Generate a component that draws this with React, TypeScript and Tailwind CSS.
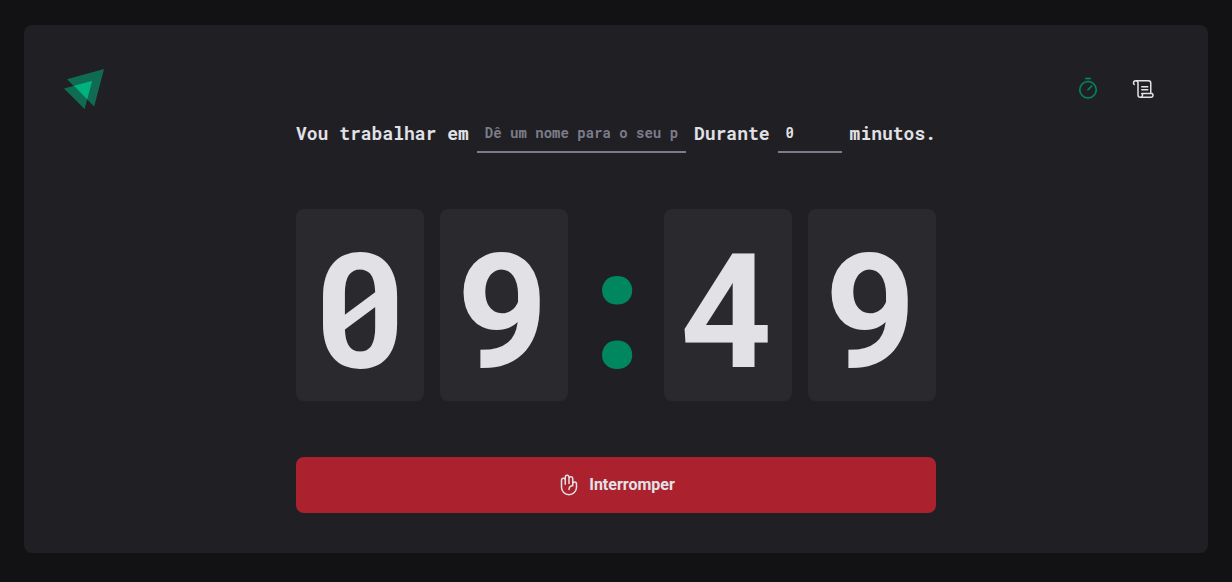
import { PiHandPalm, PiScroll, PiTimer } from "react-icons/pi";

function Logo() {
  return (
    <svg width="40" height="40" viewBox="0 0 40 40" role="img" aria-label="Ignite Timer">
      <path d="M3 10.3 40 0 30.2 37.4Z" fill="#00B37E" fillOpacity="0.52" />
      <path d="M0 19.5 28 12 20.6 40Z" fill="#00B37E" fillOpacity="0.52" />
      <path d="M10.2 16.8 28 12 23.2 30.1Z" fill="#00B37E" />
    </svg>
  );
}

function Digit({ value }: { value: string }) {
  return (
    <span className="flex h-48 w-1/5 shrink-0 items-center justify-center rounded-lg bg-[#29292e]">{value}</span>
  );
}

const field =
  "h-10 min-w-0 border-b-2 border-[#7c7c8a] bg-transparent px-2 text-sm font-bold text-[#e1e1e6] outline-none placeholder:text-[#7c7c8a] focus:border-[#00875f]";

export default function App() {
  return (
    <div className="min-h-screen bg-[#121214] px-6 pt-[25px] pb-7 font-['Roboto',sans-serif]">
      <div className="mx-auto flex max-w-[1184px] flex-col rounded-lg bg-[#202024] p-10">
        <header className="flex items-center justify-between">
          <Logo />
          <nav className="flex gap-2">
            <a href="#timer" aria-label="Timer" className="flex size-12 items-center justify-center text-[#00875f]">
              <PiTimer size={24} strokeWidth={2} />
            </a>
            <a href="#history" aria-label="Histórico" className="flex size-12 items-center justify-center text-[#e1e1e6]">
              <PiScroll size={24} />
            </a>
          </nav>
        </header>
        <main>
          <form className="mx-auto flex max-w-[640px] flex-col gap-14">
            <div className="flex items-center gap-2 font-['Roboto_Mono','DejaVu_Sans_Mono',monospace] text-lg font-bold text-[#e1e1e6]">
              <label htmlFor="task" className="whitespace-nowrap">Vou trabalhar em</label>
              <input id="task" placeholder="Dê um nome para o seu projeto" className={`${field} flex-1`} />
              <label htmlFor="minutes">Durante</label>
              <input id="minutes" inputMode="numeric" defaultValue="0" className={`${field} w-16`} />
              <span>minutos.</span>
            </div>
            <div className="flex gap-4 font-['Roboto_Mono','Roboto',sans-serif] text-[160px] leading-[128px] font-bold text-[#e1e1e6]">
              <Digit value="0" />
              <Digit value="9" />
              <span className="flex min-w-0 flex-1 items-center justify-center text-[#00875f]">:</span>
              <Digit value="4" />
              <Digit value="9" />
            </div>
            <button type="button" className="flex h-14 items-center justify-center gap-2 rounded-lg bg-[#ab222e] font-bold text-[#e1e1e6]">
              <PiHandPalm size={24} />
              Interromper
            </button>
          </form>
        </main>
      </div>
    </div>
  );
}
